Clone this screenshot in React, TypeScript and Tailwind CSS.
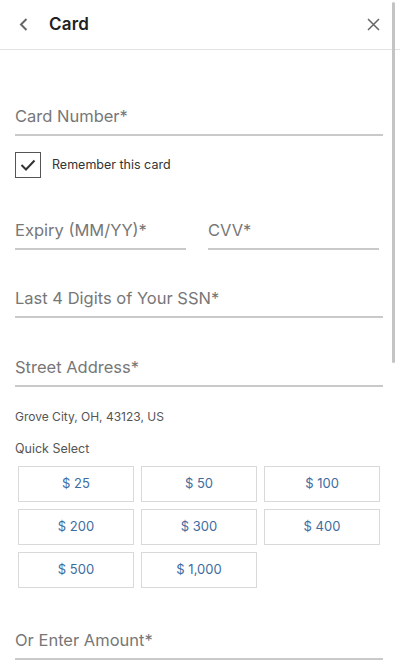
import React from "react";

const amounts = ["$ 25", "$ 50", "$ 100", "$ 200", "$ 300", "$ 400", "$ 500", "$ 1,000"];

function Field({ label, className = "" }: { label: string; className?: string }) {
  return (
    <div className={`border-b-2 border-[#c9c9c9] pb-[6px] ${className}`}>
      <div className="text-[16.5px] leading-[24px] text-[#777]">{label}</div>
    </div>
  );
}

export default function App() {
  return (
    <div
      className="relative w-[400px] h-[664px] overflow-hidden bg-white"
      style={{ fontFamily: "Inter, 'Noto Sans', sans-serif" }}
    >
      {/* Header */}
      <div className="flex items-center h-[50px] border-b border-[#e2e2e2] pl-[19px] pr-[20px]">
        <svg width="9" height="13" viewBox="0 0 9 13" fill="none">
          <path d="M7.5 1L2 6.5L7.5 12" stroke="#666" strokeWidth="2" />
        </svg>
        <span className="ml-[21px] text-[17px] font-semibold text-[#222] tracking-[0.2px]">Card</span>
        <svg className="ml-auto" width="13" height="13" viewBox="0 0 13 13" fill="none">
          <path d="M1 1L12 12M12 1L1 12" stroke="#666" strokeWidth="1.5" />
        </svg>
      </div>

      {/* Form */}
      <div className="pl-[15px] pr-[17px]">
        <Field label="Card Number*" className="mt-[54px]" />

        <div className="flex items-center mt-[16px]">
          <div className="w-[26px] h-[26px] border-[1.5px] border-[#555] flex items-center justify-center">
            <svg width="16" height="12" viewBox="0 0 16 12" fill="none">
              <path d="M1.5 6L6 10.5L14.5 1.5" stroke="#333" strokeWidth="2" />
            </svg>
          </div>
          <span className="ml-[11px] text-[12.5px] text-[#333]">Remember this card</span>
        </div>

        <div className="flex gap-[22px] mt-[40px]">
          <Field label="Expiry (MM/YY)*" className="w-[171px]" />
          <Field label="CVV*" className="w-[171px]" />
        </div>

        <Field label="Last 4 Digits of Your SSN*" className="mt-[36px]" />
        <Field label="Street Address*" className="mt-[37px]" />

        <div className="mt-[21px] text-[12px] leading-[18px] text-[#555]">Grove City, OH, 43123, US</div>
        <div className="mt-[14px] text-[12.5px] leading-[18px] text-[#555]">Quick Select</div>

        <div className="grid grid-cols-3 gap-[7px] mt-[8px] mx-[3px]">
          {amounts.map((a) => (
            <div
              key={a}
              className="h-[36px] border border-[#d9d9d9] flex items-center justify-center text-[13px] text-[#3e6c9f]"
            >
              {a}
            </div>
          ))}
        </div>

        <Field label="Or Enter Amount*" className="mt-[40px]" />
      </div>

      {/* Scrollbar */}
      <div className="absolute right-[5px] top-[2px] w-[3px] h-[361px] bg-[#c4c4c4] rounded-full" />
    </div>
  );
}
